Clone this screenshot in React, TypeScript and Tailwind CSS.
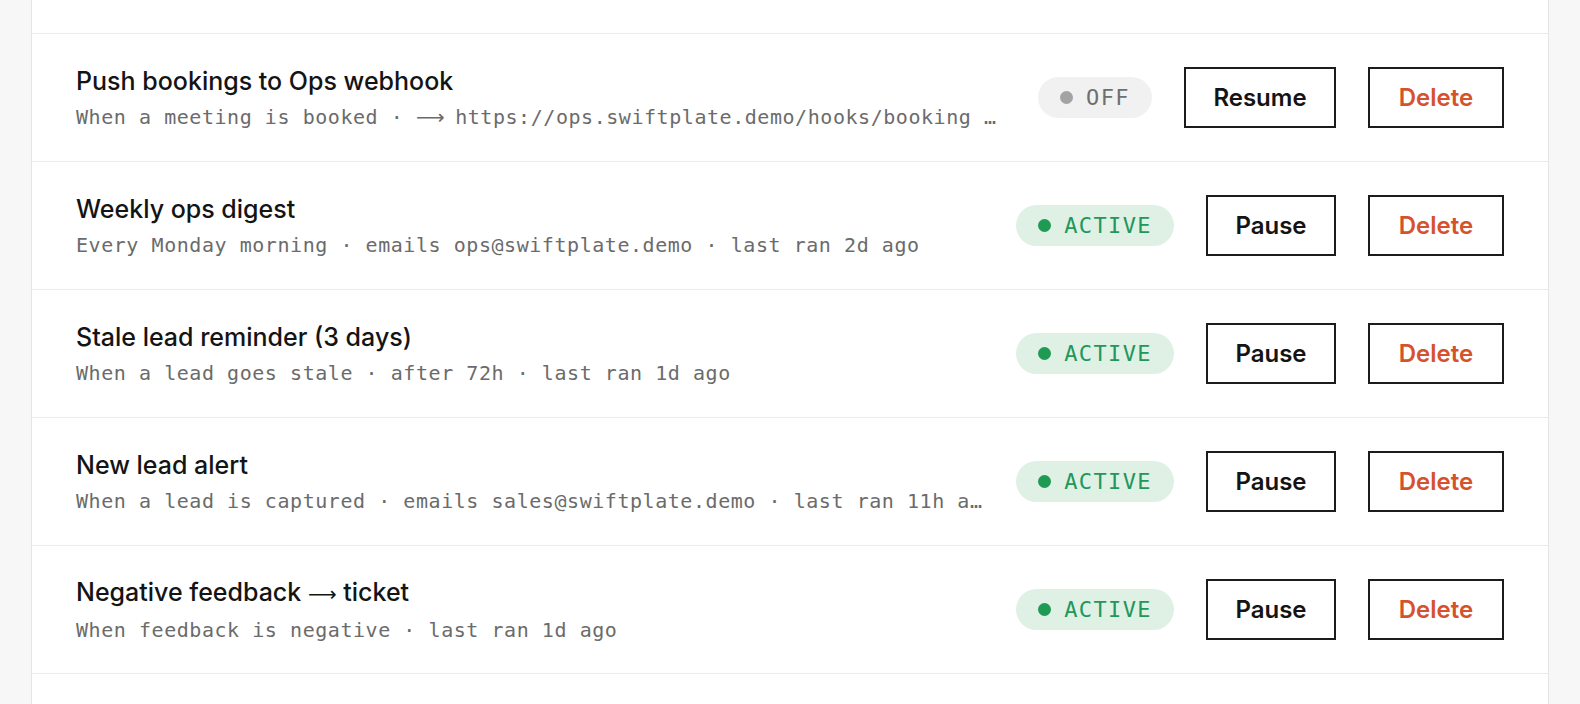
import type { ReactNode } from 'react';

type Automation = {
  title: ReactNode[];
  detail: ReactNode[];
  active: boolean;
};

// long arrows, drawn wider than the mono cell
const Arrow = () => (
  <span className="inline-block w-[26.6px] font-['DejaVu_Sans',sans-serif] tracking-normal">⟶</span>
);
const TitleArrow = () => <span className="font-['DejaVu_Sans',sans-serif] text-[20px]">⟶</span>;

const automations: Automation[] = [
  {
    title: ['Push bookings to Ops webhook'],
    detail: ['When a meeting is booked · ', <Arrow key="a" />, ' https://ops.swiftplate.demo/hooks/booking · never ran'],
    active: false,
  },
  {
    title: ['Weekly ops digest'],
    detail: ['Every Monday morning · emails ops@swiftplate.demo · last ran 2d ago'],
    active: true,
  },
  {
    title: ['Stale lead reminder (3 days)'],
    detail: ['When a lead goes stale · after 72h · last ran 1d ago'],
    active: true,
  },
  {
    title: ['New lead alert'],
    detail: ['When a lead is captured · emails sales@swiftplate.demo · last ran 11h ago'],
    active: true,
  },
  {
    title: ['Negative feedback ', <TitleArrow key="a" />, ' ticket'],
    detail: ['When feedback is negative · last ran 1d ago'],
    active: true,
  },
];

function StatusPill({ active }: { active: boolean }) {
  return (
    <span
      className={`flex h-[41px] items-center gap-[13px] rounded-full pl-[22px] pr-[22px] font-['DejaVu_Sans_Mono',monospace] text-[22px] tracking-[1.4px] ${
        active ? 'bg-[#dff0e5] text-[#23975a]' : 'bg-[#f1f1f1] text-[#6f6f6f]'
      }`}
    >
      <span className={`h-[13px] w-[13px] rounded-full ${active ? 'bg-[#1e9a55]' : 'bg-[#a3a3a3]'}`} />
      {active ? 'ACTIVE' : 'OFF'}
    </span>
  );
}

function Row({ item }: { item: Automation }) {
  return (
    <div className="flex h-32 items-center border-b border-[#ececec] px-11">
      <div className="min-w-0 flex-1 pr-8">
        <div className="mt-px text-[25px] leading-8 font-medium text-[#141414]">{item.title}</div>
        <div className="mt-[6px] truncate font-['DejaVu_Sans_Mono',monospace] text-[20px] leading-7 tracking-[0.55px] text-[#6b6b6b]">
          {item.detail}
        </div>
      </div>
      <div className="flex shrink-0 items-center gap-8">
        <StatusPill active={item.active} />
        <button
          className={`h-[61px] border-2 border-[#1c1c1c] text-[24px] font-semibold text-[#141414] ${
            item.active ? 'w-[130px]' : 'w-[152px]'
          }`}
        >
          {item.active ? 'Pause' : 'Resume'}
        </button>
        <button className="h-[61px] w-[136px] border-2 border-[#1c1c1c] text-[24px] font-semibold text-[#d6512d]">
          Delete
        </button>
      </div>
    </div>
  );
}

export default function App() {
  return (
    <div className="min-h-screen bg-[#f7f7f7] px-[31px] font-['Inter',sans-serif]">
      <div className="min-h-screen border-x border-[#e4e4e4] bg-white">
        <div className="h-[34px] border-b border-[#ececec]" />
        {automations.map((item, i) => (
          <Row key={i} item={item} />
        ))}
      </div>
    </div>
  );
}
